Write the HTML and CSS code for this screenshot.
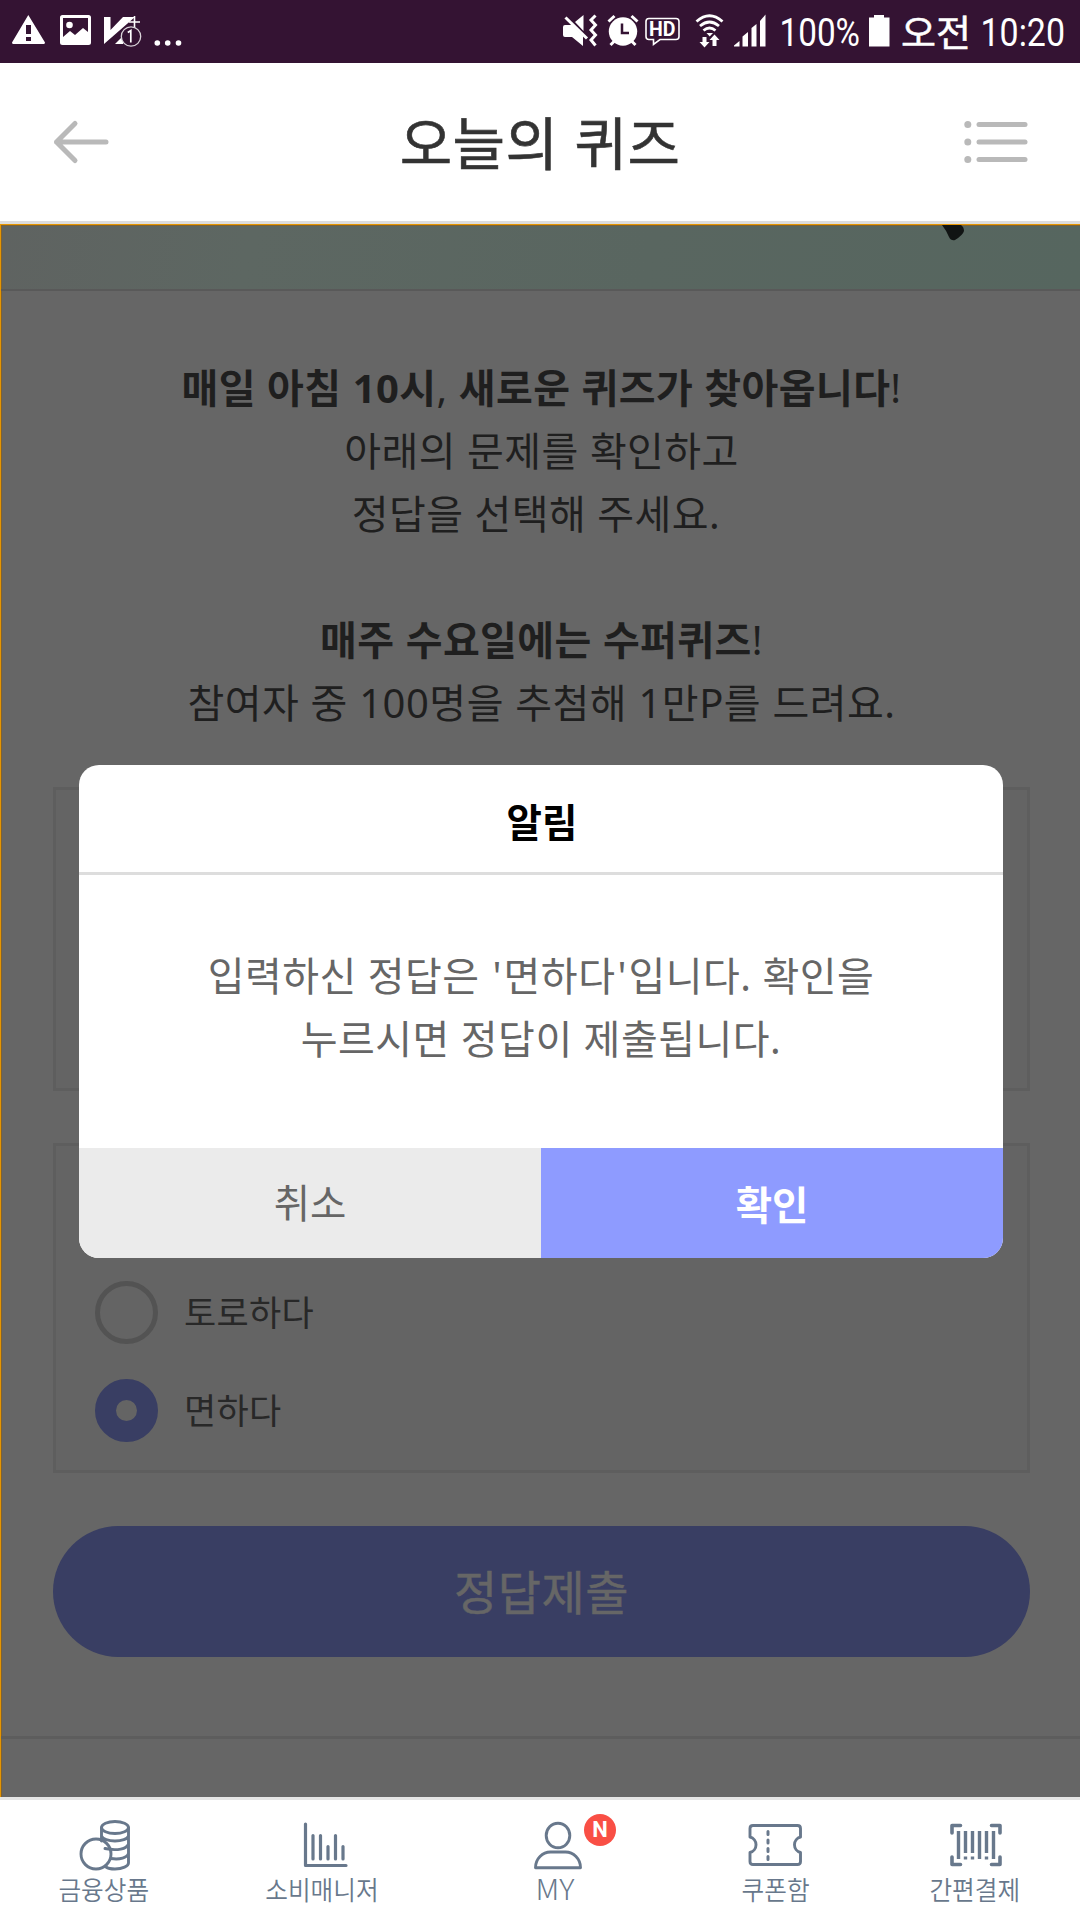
FILE: index.html
```html
<!DOCTYPE html>
<html lang="ko">
<head>
<meta charset="utf-8">
<title>오늘의 퀴즈</title>
<link rel="stylesheet" href="styles.css">
</head>
<body>
<div class="screen">
  <div class="status">
    <svg class="status-left" width="190" height="63" viewBox="0 0 190 63" fill="#fff">
      <path d="M28.300 15 45 42.500Q45 44 43.500 44H13.500Q12 44 12 42.500ZM26 25v9h5v-9zM26 37v4h5v-4z" fill-rule="evenodd"/>
      <path d="M62.500 15h26a2.500 2.500 0 0 1 2.500 2.500v25a2.500 2.500 0 0 1-2.500 2.500h-26a2.500 2.500 0 0 1-2.500-2.500v-25a2.500 2.500 0 0 1 2.500-2.500zM63 18v19l7-6 5 4 8-7 5 4V18z" fill-rule="evenodd"/>
      <circle cx="69.500" cy="25" r="3.300"/>
      <path d="M104 17h6.500v13L123 17h12L104 44zM115 44l8-8v8z"/>
      <path d="M134.500 16v12M129 22h11" stroke="#fff" stroke-width="1.600"/>
      <circle cx="131" cy="36.500" r="9.700" fill="#341333" stroke="#d9d3d9" stroke-width="1.300"/>
      <path d="M127.800 32.500l3-2v12" fill="none" stroke="#fff" stroke-width="1.700"/>
      <circle cx="157.300" cy="43" r="2.800"/><circle cx="167.700" cy="43" r="2.800"/><circle cx="178.500" cy="43" r="2.800"/>
    </svg>
    <svg class="status-right" width="530" height="63" viewBox="550 0 530 63" fill="#fff">
      <path d="M563 27q0-2 2-2h7l11 11v10l-11-9h-7q-2 0-2-2zM575 22l8.500-7v16z"/>
      <path d="M565.500 17.500l21.500 21" stroke="#fff" stroke-width="3"/>
      <path d="M595.500 15.500l-4.500 4.500 4.500 5-4.500 5 4.500 5-4.500 5 4.500 5.500" fill="none" stroke="#fff" stroke-width="3"/>
      <circle cx="623" cy="31.500" r="14.200"/>
      <path d="M608.500 21.500l6-5.500M637.500 21.500l-6-5.500M610.500 45l4-4M635.500 45l-4-4" stroke="#fff" stroke-width="3"/>
      <path d="M622 23.500v9.500h7" fill="none" stroke="#341333" stroke-width="2.500"/>
      <path d="M649 18.500h27a3 3 0 0 1 3 3v15a3 3 0 0 1-3 3h-16l-6.500 5v-5h-4.500a3 3 0 0 1-3-3v-15a3 3 0 0 1 3-3z" fill="none" stroke="#fff" stroke-width="1.600"/>
      <text class="hd" x="649" y="36.300" textLength="26.500" lengthAdjust="spacingAndGlyphs">HD</text>
      <path d="M696.500 21.500q13-11.500 26 0M700 26q9.500-8 19 0M703.500 30.500q6-5 12 0" fill="none" stroke="#fff" stroke-width="2.800"/>
      <path d="M706.500 33h6.500l-3.300 3.500zM702.500 37h4v5h3l-5 5.500-5-5.500h3zM712.500 46v-6h-3l5-5.500 5 5.500h-3v6z"/>
      <path d="M734 46.500v-1l5.500-4.500v5.500zM742.500 46.500V36.500l5.500-4.500v14.500zM751.500 46.500V28l5-4v22.500zM760 46.500V21l5.500-6.500v32z"/>
      <text class="clock" x="779.500" y="46" textLength="80.500" lengthAdjust="spacingAndGlyphs">100%</text>
      <path d="M874 15h10v2.500h5.500v29H869v-29h5z"/>
      <text class="ampm" x="901" y="46.500" textLength="70" lengthAdjust="spacingAndGlyphs">오전</text>
      <text class="clock" x="980.500" y="46" textLength="84.500" lengthAdjust="spacingAndGlyphs">10:20</text>
    </svg>
  </div>
  <header class="header">
    <svg width="58" height="46" viewBox="0 0 58 46" fill="none" stroke="#b9b9b9" stroke-width="5" stroke-linecap="round" stroke-linejoin="round"><path d="M4.500 23H54M23 4.500 4.500 23 23 41.500"/></svg>
    <h1 class="title">오늘의 퀴즈</h1>
    <svg width="64" height="46" viewBox="0 0 64 46" fill="#b9b9b9"><circle cx="3.800" cy="5.500" r="3.500"/><circle cx="3.800" cy="23" r="3.500"/><circle cx="3.800" cy="40.500" r="3.500"/><rect x="12.500" y="3" width="51" height="5" rx="2.500"/><rect x="12.500" y="20.500" width="51" height="5" rx="2.500"/><rect x="12.500" y="38" width="51" height="5" rx="2.500"/></svg>
  </header>
  <main class="content">
    <div class="banner"><svg width="26" height="16" viewBox="0 0 26 16"><path d="M2 0h19q3 2 3 6-1 4-9 9-4 1-6-3-3-7-7-12z" fill="#111413"/></svg></div>
    <div class="intro">
      <p class="line"><b>매일 아침 10시<span class="thin">,</span> 새로운 퀴즈가 찾아옵니다<span class="thin">!</span></b></p>
      <p class="line">아래의 문제를 확인하고</p>
      <p class="line">정답을 선택해 주세요.&nbsp;</p>
      <p class="line">&nbsp;</p>
      <p class="line"><b>매주 수요일에는 수퍼퀴즈<span class="thin">!</span></b></p>
      <p class="line wide">참여자 중 100명을 추첨해 1만P를 드려요.</p>
    </div>
    <section class="box question"></section>
    <section class="box answers">
      <label class="option"><span class="radio"></span><span class="option-text">토로하다</span></label>
      <label class="option"><span class="radio checked"></span><span class="option-text">면하다</span></label>
    </section>
    <button class="submit">정답제출</button>
    <div class="rule"></div>
    <div class="modal">
      <h2 class="modal-title">알림</h2>
      <p class="message">입력하신 정답은 <span class="quote">'</span>면하다<span class="quote">'</span>입니다. 확인을<br>누르시면 정답이 제출됩니다.</p>
      <div class="actions"><button class="cancel">취소</button><button class="ok">확인</button></div>
    </div>
  </main>
  <nav class="nav">
    <a class="tab"><svg class="shift-coins" width="54" height="54" viewBox="0 0 54 54"><ellipse cx="37" cy="8.500" rx="13.500" ry="6"/><path d="M23.500 9v13M50.500 9v35c0 3-6 6-13.500 6-4 0-7-.5-9-2M23.500 17c1 3 7 5 13.500 5s12.500-2 13.500-5M27 29.500c12 2.500 22 .5 23.500-4.500M33 39.500c9 1.500 16-1 17.500-5"/><circle cx="18" cy="35" r="15"/></svg><span class="label">금융상품</span></a>
    <a class="tab"><svg class="shift-chart" width="54" height="54" viewBox="0 0 54 54"><path d="M6.500 5v41.500H47M14 16.500v23.500M21.500 16.500v23.500M29 27.500v12.500M36.500 16.500v23.500M44 27.500v12.500" stroke-width="3.200"/></svg><span class="label">소비매니저</span></a>
    <a class="tab"><svg class="shift-person" width="54" height="54" viewBox="0 0 54 54"><ellipse cx="27" cy="16.500" rx="11.800" ry="12.300"/><path d="M4.500 48.700c0-9 7-15.700 15-15.700h15c8 0 15 6.700 15 15.700z"/></svg><span class="label latin">MY</span><i class="badge">N</i></a>
    <a class="tab"><svg width="60" height="54" viewBox="0 0 60 54"><path d="M7 6.500h44.500q3 0 3 3v8.500a8 8 0 0 0 0 15.500V42.500q0 3-3 3H7q-3 0-3-3v-9a8 8 0 0 0 0-15.500V9.500q0-3 3-3z"/><path d="M22 12.500v3M22 21v3M22 29.500v3M22 37.500v3" stroke-width="3"/></svg><span class="label">쿠폰함</span></a>
    <a class="tab"><svg class="shift-barcode" width="54" height="54" viewBox="0 0 54 54"><path d="M3 14V6.500h8.500M42.500 6.500H51V14M51 38v7.500h-8.500M11.500 45.500H3V38" stroke-width="3.600"/><path d="M9.500 12v28M16.500 12v22M23.500 12v22M30.500 12v28M37.500 12v22M44.500 12v28M16.500 37.500v3M23.500 37.500v3M37.500 37.500v3" stroke-width="3.400" stroke-linecap="butt"/></svg><span class="label">간편결제</span></a>
  </nav>
</div>
</body>
</html>
```
FILE: styles.css
```css
* { box-sizing: border-box; margin: 0; padding: 0; }
body { width: 1080px; font-family: "Noto Sans CJK KR", sans-serif; }
button { border: 0; font-family: inherit; }
svg { display: block; flex: none; }
.screen { height: 1920px; display: flex; flex-direction: column; overflow: hidden; background: #fff; }
.status { height: 63px; flex: none; display: flex; justify-content: space-between; background: #341333; }
.hd { font: 700 19.5px Roboto, sans-serif; }
.clock { font: 400 39px Roboto, sans-serif; }
.ampm { font: 400 37px "Noto Sans CJK KR", sans-serif; stroke: #fff; stroke-width: .5px; }
.header { height: 161px; flex: none; display: flex; align-items: center; justify-content: space-between; padding: 0 52px; border-bottom: 3px solid #ddd; background: #fff; }
.title { padding: 0 0 5px 6px; font-size: 57px; font-weight: 400; letter-spacing: .4px; line-height: 80px; color: #333; -webkit-text-stroke: .6px #333; }
.content { position: relative; height: 1573px; flex: none; display: flex; flex-direction: column; align-items: stretch; background: #666; border-top: 1px solid #e69500; border-left: 1px solid #e69500; box-shadow: inset 1px 0 #7e6233; color: #1f1f1f; }
.banner { height: 66px; flex: none; display: flex; justify-content: flex-end; padding-right: 114px; background: linear-gradient(100deg, #5f6361 0, #5d6762 23%, #596660 60%, #56665f 100%); border-bottom: 2px solid #595959; box-shadow: inset 1px 1px #7e6233; }
.intro { margin-top: 65px; height: 431px; flex: none; padding-left: 2px; text-align: center; }
.line { height: 63px; line-height: 63px; font-size: 40px; letter-spacing: .4px; word-spacing: .4px; white-space: nowrap; font-family: "Noto Sans", "Noto Sans CJK KR", sans-serif; }
.wide { letter-spacing: .5px; }
.thin { font-weight: 400; }
.box { flex: none; margin: 0 50px 0 52px; border: 3px solid #5e5e5e; background: #646464; }
.question { height: 304px; }
.answers { margin-top: 52px; height: 330px; padding: 135px 0 0 39px; display: flex; flex-direction: column; gap: 35px; }
.option { display: flex; align-items: center; gap: 26px; height: 63px; font-size: 35px; letter-spacing: .3px; color: #282828; }
.option-text { padding-bottom: 4px; }
.radio { width: 63px; height: 63px; border-radius: 50%; border: 5px solid #535353; }
.checked { border: 21px solid #393e63; }
.submit { flex: none; margin: 53px 50px 0 52px; padding-bottom: 5px; height: 131px; border-radius: 66px; background: #393e63; color: #666; font-size: 47px; letter-spacing: .5px; -webkit-text-stroke: .5px #666; }
.rule { margin-top: 79px; height: 3px; flex: none; background: #5d5d5d; }
.modal { position: absolute; left: 78px; top: 540px; width: 924px; height: 493px; border-radius: 20px; overflow: hidden; background: #fff; display: flex; flex-direction: column; }
.modal-title { height: 110px; flex: none; padding-left: 2px; border-bottom: 3px solid #ddd; text-align: center; line-height: 110px; font-size: 38.5px; font-weight: 700; color: #000; }
.message { flex: 1; padding-top: 69px; text-align: center; font-size: 40px; letter-spacing: .5px; line-height: 63px; color: #666; white-space: nowrap; font-family: "Noto Sans", "Noto Sans CJK KR", sans-serif; }
.quote { padding: 0 1.5px 0 2px; }
.actions { height: 110px; flex: none; display: flex; }
.actions button { flex: 1; font-size: 39.5px; }
.actions .cancel { padding-bottom: 6px; background: #ebebeb; color: #666; }
.actions .ok { padding-bottom: 1px; background: #8e9bff; color: #fff; font-weight: 700; }
.nav { height: 123px; flex: none; display: grid; grid-template-columns: 208px 228px 240px 200px 198px; padding-top: 19px; border-top: 3px solid #e5e5e5; background: #fff; }
.tab { position: relative; display: flex; flex-direction: column; align-items: center; color: #68788c; white-space: nowrap; }
.tab svg { fill: none; stroke: #68788c; stroke-width: 2.9; stroke-linecap: round; stroke-linejoin: round; }
.shift-coins { margin-left: 1px; }
.shift-chart { margin-left: 7px; }
.shift-person { margin-left: 3px; }
.shift-barcode { margin-left: 2px; }
.label { margin-top: -3px; font-size: 26.5px; line-height: 38px; font-weight: 350; transform: scaleX(.93); }
.latin { margin: -4px 2px 0 0; font-size: 28px; font-weight: 300; transform: scaleX(1.08); }
.badge { position: absolute; left: 148px; top: -5px; width: 32px; height: 32px; border-radius: 50%; background: #f94f45; color: #fff; font: 700 22px/32px Roboto, sans-serif; text-align: center; }
```
